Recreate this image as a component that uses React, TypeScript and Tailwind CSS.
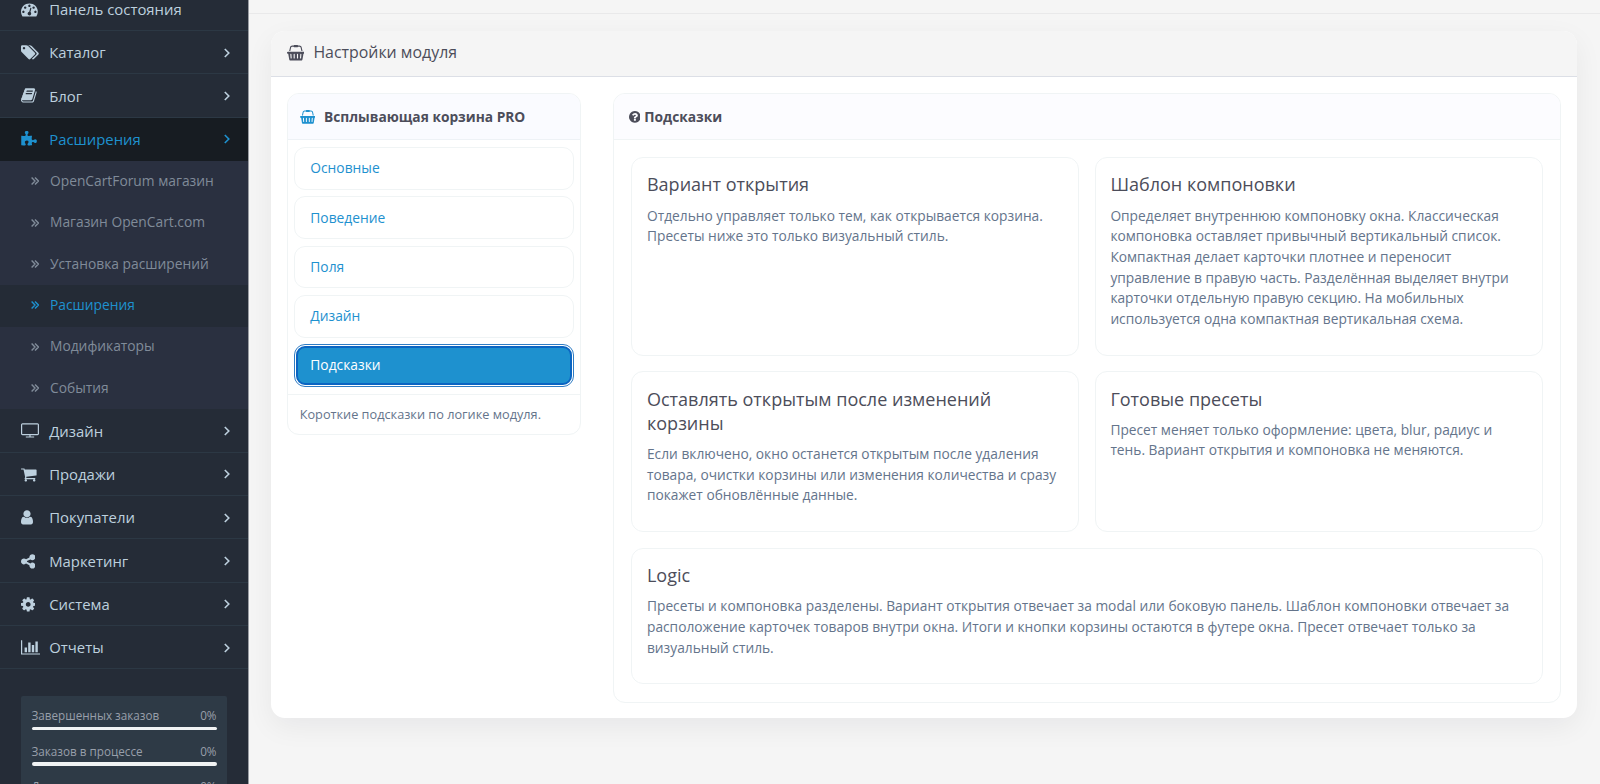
import { useState } from "react";
import clsx from "clsx";

interface IconProps {
  name: keyof typeof ICONS;
  className?: string;
}

const ICONS = {
  dashboard: {
    box: "0 0 1792 1792",
    d: "M384 1152q0-53-37.5-90.5t-90.5-37.5-90.5 37.5-37.5 90.5 37.5 90.5 90.5 37.5 90.5-37.5 37.5-90.5zm192-448q0-53-37.5-90.5t-90.5-37.5-90.5 37.5-37.5 90.5 37.5 90.5 90.5 37.5 90.5-37.5 37.5-90.5zm428 481l101-382q6-26-7.5-48.5t-38.5-29.5-48 6.5-30 39.5l-101 382q-60 5-107 43.5t-63 98.5q-20 77 20 146t117 89 146-20 89-117q16-60-6-117t-72-91zm660-33q0-53-37.5-90.5t-90.5-37.5-90.5 37.5-37.5 90.5 37.5 90.5 90.5 37.5 90.5-37.5 37.5-90.5zm-640-640q0-53-37.5-90.5t-90.5-37.5-90.5 37.5-37.5 90.5 37.5 90.5 90.5 37.5 90.5-37.5 37.5-90.5zm448 192q0-53-37.5-90.5t-90.5-37.5-90.5 37.5-37.5 90.5 37.5 90.5 90.5 37.5 90.5-37.5 37.5-90.5zm320 448q0 261-141 483-19 29-54 29h-1402q-35 0-54-29-141-221-141-483 0-182 71-348t191-286 286-191 348-71 348 71 286 191 191 286 71 348z",
  },
  tags: {
    box: "0 0 1920 1792",
    d: "M448 448q0-53-37.5-90.5t-90.5-37.5-90.5 37.5-37.5 90.5 37.5 90.5 90.5 37.5 90.5-37.5 37.5-90.5zm1067 576q0 53-37 90l-491 492q-39 37-91 37-53 0-90-37l-715-716q-38-37-64.5-101t-26.5-117v-416q0-52 38-90t90-38h416q53 0 117 26.5t102 64.5l715 714q37 39 37 91zm384 0q0 53-37 90l-491 492q-39 37-91 37-36 0-59-14t-53-45l470-470q37-37 37-90 0-52-37-91l-715-714q-38-38-102-64.5t-117-26.5h224q53 0 117 26.5t102 64.5l715 714q37 39 37 91z",
  },
  book: {
    box: "64 0 1792 1792",
    d: "M1703 478q40 57 18 129l-275 906q-19 64-76.5 107.5t-122.5 43.5h-923q-77 0-148.5-53.5t-99.5-131.5q-24-67-2-127 0-4 3-27t4-37q1-8-3-21.5t-3-19.5q2-11 8-21t16.5-23.5 16.5-23.5q23-38 45-91.5t30-91.5q3-10 .5-30t-.5-28q3-11 17-28t17-23q21-36 42-92t25-90q1-9-2.5-32t.5-28q4-13 22-30.5t22-22.5q19-26 42.5-84.5t27.5-96.5q1-8-3-25.5t-2-26.5q2-8 9-18t18-23 17-21q8-12 16.5-30.5t15-35 16-36 19.5-32 26.5-23.5 36-11.5 47.5 5.5l-1 3q38-9 51-9h761q74 0 114 56t18 130l-274 906q-36 119-71.5 153.5t-128.5 34.5h-869q-27 0-38 15-11 16-1 43 24 70 144 70h923q29 0 56-15.5t35-41.5l300-987q7-22 5-57 38 15 59 43zm-1064 2q-4 13 2 22.5t20 9.5h608q13 0 25.5-9.5t16.5-22.5l21-64q4-13-2-22.5t-20-9.5h-608q-13 0-25.5 9.5t-16.5 22.5zm-83 256q-4 13 2 22.5t20 9.5h608q13 0 25.5-9.5t16.5-22.5l21-64q4-13-2-22.5t-20-9.5h-608q-13 0-25.5 9.5t-16.5 22.5z",
  },
  puzzle: {
    box: "64 0 1792 1792",
    d: "M1755 1083q0 81-44.5 135t-123.5 54q-41 0-77.5-17.5t-59-38-56.5-38-71-17.5q-110 0-110 124 0 39 16 115t15 115v5q-22 0-33 1-34 3-97.5 11.5t-115.5 13.5-98 5q-61 0-103-26.5t-42-83.5q0-37 17.5-71t38-56.5 38-59 17.5-77.5q0-79-54-123.5t-135-44.5q-84 0-143 45.5t-59 127.5q0 43 15 83t33.5 64.5 33.5 53 15 50.5q0 45-46 89-37 35-117 35-95 0-245-24-9-2-27.5-4t-27.5-4l-13-2q-1 0-3-1-2 0-2-1v-1024q2 1 17.5 3.5t34 5 21.5 3.5q150 24 245 24 80 0 117-35 46-44 46-89 0-22-15-50.5t-33.5-53-33.5-64.5-15-83q0-82 59-127.5t144-45.5q80 0 134 44.5t54 123.5q0 41-17.5 77.5t-38 59-38 56.5-17.5 71q0 57 42 83.5t103 26.5q64 0 180-15t163-17v2q-1 2-3.5 17.5t-5 34-3.5 21.5q-24 150-24 245 0 80 35 117 44 46 89 46 22 0 50.5-15t53-33.5 64.5-33.5 83-15q82 0 127.5 59t45.5 143z",
  },
  television: {
    box: "0 0 1920 1792",
    d: "M1792 1248v-960q0-13-9.5-22.5t-22.5-9.5h-1600q-13 0-22.5 9.5t-9.5 22.5v960q0 13 9.5 22.5t22.5 9.5h1600q13 0 22.5-9.5t9.5-22.5zm128-960v960q0 66-47 113t-113 47h-736v128h352q14 0 23 9t9 23v64q0 14-9 23t-23 9h-832q-14 0-23-9t-9-23v-64q0-14 9-23t23-9h352v-128h-736q-66 0-113-47t-47-113v-960q0-66 47-113t113-47h1600q66 0 113 47t47 113z",
  },
  cart: {
    box: "64 0 1792 1792",
    d: "M704 1536q0 52-38 90t-90 38-90-38-38-90 38-90 90-38 90 38 38 90zm896 0q0 52-38 90t-90 38-90-38-38-90 38-90 90-38 90 38 38 90zm128-1088v512q0 24-16.5 42.5t-40.5 21.5l-1044 122q13 60 13 70 0 16-24 64h920q26 0 45 19t19 45-19 45-45 19h-1024q-26 0-45-19t-19-45q0-11 8-31.5t16-36 21.5-40 15.5-29.5l-177-823h-204q-26 0-45-19t-19-45 19-45 45-19h256q16 0 28.5 6.5t19.5 15.5 13 24.5 8 26 5.5 29.5 4.5 26h1201q26 0 45 19t19 45z",
  },
  user: {
    box: "256 0 1280 1792",
    d: "M1536 1399q0 109-62.5 187t-150.5 78h-854q-88 0-150.5-78t-62.5-187q0-85 8.5-160.5t31.5-152 58.5-131 94-89 134.5-34.5q131 128 313 128t313-128q76 0 134.5 34.5t94 89 58.5 131 31.5 152 8.5 160.5zm-256-887q0 159-112.5 271.5t-271.5 112.5-271.5-112.5-112.5-271.5 112.5-271.5 271.5-112.5 271.5 112.5 112.5 271.5z",
  },
  share: {
    box: "128 0 1536 1792",
    d: "M1344 1024q133 0 226.5 93.5t93.5 226.5-93.5 226.5-226.5 93.5-226.5-93.5-93.5-226.5q0-12 2-34l-360-180q-92 86-218 86-133 0-226.5-93.5t-93.5-226.5 93.5-226.5 226.5-93.5q126 0 218 86l360-180q-2-22-2-34 0-133 93.5-226.5t226.5-93.5 226.5 93.5 93.5 226.5-93.5 226.5-226.5 93.5q-126 0-218-86l-360 180q2 22 2 34t-2 34l360 180q92-86 218-86z",
  },
  cog: {
    box: "128 0 1536 1792",
    d: "M1152 896q0-106-75-181t-181-75-181 75-75 181 75 181 181 75 181-75 75-181zm512-109v222q0 12-8 23t-20 13l-185 28q-19 54-39 91 35 50 107 138 10 12 10 25t-9 23q-27 37-99 108t-94 71q-12 0-26-9l-138-108q-44 23-91 38-16 136-29 186-7 28-36 28h-222q-14 0-24.5-8.5t-11.5-21.5l-28-184q-49-16-90-37l-141 107q-10 9-25 9-14 0-25-11-126-114-165-168-7-10-7-23 0-12 8-23 15-21 51-66.5t54-70.5q-27-50-41-99l-183-27q-13-2-21-12.5t-8-23.5v-222q0-12 8-23t19-13l186-28q14-46 39-92-40-57-107-138-10-12-10-24 0-10 9-23 26-36 98.5-107.5t94.5-71.5q13 0 26 10l138 107q44-23 91-38 16-136 29-186 7-28 36-28h222q14 0 24.5 8.5t11.5 21.5l28 184q49 16 90 37l142-107q9-9 24-9 13 0 25 10 129 119 165 170 7 8 7 22 0 12-8 23-15 21-51 66.5t-54 70.5q26 50 41 98l183 28q13 2 21 12.5t8 23.5z",
  },
  chart: {
    box: "0 0 2048 1792",
    d: "M640 896v512h-256v-512h256zm384-512v1024h-256v-1024h256zm1024 1152v128h-2048v-1536h128v1408h1920zm-640-896v768h-256v-768h256zm384-384v1152h-256v-1152h256z",
  },
  question: {
    box: "128 0 1536 1792",
    d: "M1024 1376v-192q0-14-9-23t-23-9h-192q-14 0-23 9t-9 23v192q0 14 9 23t23 9h192q14 0 23-9t9-23zm256-672q0-88-55.5-163t-138.5-116-170-41q-243 0-371 213-15 24 8 42l132 100q7 6 19 6 16 0 25-12 53-68 86-92 34-24 86-24 48 0 85.5 26t37.5 59q0 38-20 61t-68 45q-63 28-115.5 86.5t-52.5 125.5v36q0 14 9 23t23 9h192q14 0 23-9t9-23q0-19 21.5-49.5t54.5-49.5q32-18 49-28.5t46-35 44.5-48 28-60.5 12.5-81zm384 192q0 209-103 385.5t-279.5 279.5-385.5 103-385.5-103-279.5-279.5-103-385.5 103-385.5 279.5-279.5 385.5-103 385.5 103 279.5 279.5 103 385.5z",
  },
  basket: {
    box: "0 0 2048 1792",
    d: "M1920 768q53 0 90.5 37.5t37.5 90.5-37.5 90.5-90.5 37.5h-15l-115 662q-8 46-44 76t-82 30h-1280q-46 0-82-30t-44-76l-115-662h-15q-53 0-90.5-37.5t-37.5-90.5 37.5-90.5 90.5-37.5h1792zm-1435 800q26-2 43.5-22.5t15.5-46.5l-32-416q-2-26-22.5-43.5t-46.5-15.5-43.5 22.5-15.5 46.5l32 416q2 25 20.5 42t43.5 17h5zm411-64v-416q0-26-19-45t-45-19-45 19-19 45v416q0 26 19 45t45 19 45-19 19-45zm384 0v-416q0-26-19-45t-45-19-45 19-19 45v416q0 26 19 45t45 19 45-19 19-45zm352 5l32-416q2-26-15.5-46.5t-43.5-22.5-46.5 15.5-22.5 43.5l-32 416q-2 26 15.5 46.5t43.5 22.5h5q25 0 43.5-17t20.5-42zm-1156-1217l-93 412h-132l101-441q19-88 89-143.5t160-55.5h167q0-26 19-45t45-19h384q26 0 45 19t19 45h167q90 0 160 55.5t89 143.5l101 441h-132l-93-412q-11-44-45.5-72t-79.5-28h-167q0 26-19 45t-45 19h-384q-26 0-45-19t-19-45h-167q-45 0-79.5 28t-45.5 72z",
  },
};

function Icon({ name, className }: IconProps) {
  return (
    <svg viewBox={ICONS[name].box} fill="currentColor" className={clsx("block shrink-0", className)}>
      <path d={ICONS[name].d} />
    </svg>
  );
}

interface MenuEntry {
  icon: keyof typeof ICONS;
  label: string;
  leaf?: boolean;
  children?: string[];
}

const MENU: MenuEntry[] = [
  { icon: "dashboard", label: "Панель состояния", leaf: true },
  { icon: "tags", label: "Каталог" },
  { icon: "book", label: "Блог" },
  {
    icon: "puzzle",
    label: "Расширения",
    children: [
      "OpenCartForum магазин",
      "Магазин OpenCart.com",
      "Установка расширений",
      "Расширения",
      "Модификаторы",
      "События",
    ],
  },
  { icon: "television", label: "Дизайн" },
  { icon: "cart", label: "Продажи" },
  { icon: "user", label: "Покупатели" },
  { icon: "share", label: "Маркетинг" },
  { icon: "cog", label: "Система" },
  { icon: "chart", label: "Отчеты" },
];

const STATS = ["Завершенных заказов", "Заказов в процессе", "Другие статусы"];

const TABS = ["Основные", "Поведение", "Поля", "Дизайн", "Подсказки"];

const HINTS = [
  {
    title: "Вариант открытия",
    text: "Отдельно управляет только тем, как открывается корзина. Пресеты ниже это только визуальный стиль.",
  },
  {
    title: "Шаблон компоновки",
    text: "Определяет внутреннюю компоновку окна. Классическая компоновка оставляет привычный вертикальный список. Компактная делает карточки плотнее и переносит управление в правую часть. Разделённая выделяет внутри карточки отдельную правую секцию. На мобильных используется одна компактная вертикальная схема.",
  },
  {
    title: "Оставлять открытым после изменений корзины",
    text: "Если включено, окно останется открытым после удаления товара, очистки корзины или изменения количества и сразу покажет обновлённые данные.",
  },
  {
    title: "Готовые пресеты",
    text: "Пресет меняет только оформление: цвета, blur, радиус и тень. Вариант открытия и компоновка не меняются.",
  },
  {
    title: "Logic",
    wide: true,
    text: "Пресеты и компоновка разделены. Вариант открытия отвечает за modal или боковую панель. Шаблон компоновки отвечает за расположение карточек товаров внутри окна. Итоги и кнопки корзины остаются в футере окна. Пресет отвечает только за визуальный стиль.",
  },
];

function SubMenu({ items }: { items: string[] }) {
  return (
    <ul className="bg-[#2a3040]">
      {items.map((item) => (
        <li
          key={item}
          className={clsx(
            "flex h-[41.4px] items-center pb-[1.2px] pl-[31.2px] text-[13.8px]",
            item === "Расширения" ? "bg-[#242b36] text-[#1e91cf]" : "text-[#808b99]",
          )}
        >
          <svg
            viewBox="0 0 8 8"
            className="mr-[10.8px] h-2 w-2 shrink-0"
            fill="none"
            stroke="currentColor"
            strokeWidth="1.4"
          >
            <path d="M0.6 0.5 L4 4 L0.6 7.5 M4 0.5 L7.4 4 L4 7.5" />
          </svg>
          {item}
        </li>
      ))}
    </ul>
  );
}

function Sidebar() {
  return (
    <nav className="h-full w-[249px] shrink-0 overflow-hidden border-r border-[#9a9da3] bg-[#252c37]">
      <ul className="-mt-[12.3px]">
        {MENU.map((item) => (
          <li key={item.label}>
            <div
              className={clsx(
                "flex h-[43.35px] items-center border-b pt-[0.6px] pr-[18.5px] pl-[21px] text-[14.88px]",
                item.children
                  ? "border-[#171c22] bg-[#171c22] text-[#1e91cf]"
                  : "border-[#2c3844] text-[#bdd0de]",
              )}
            >
              <span className="w-[28.2px] shrink-0">
                <Icon name={item.icon} className="h-[16.8px]" />
              </span>
              <span className="grow">{item.label}</span>
              {!item.leaf && (
                <svg
                  viewBox="0 0 6 10"
                  className="h-[10px] w-[6px]"
                  fill="none"
                  stroke="currentColor"
                  strokeWidth="1.6"
                >
                  <path d="M0.8 1 L4.8 5 L0.8 9" />
                </svg>
              )}
            </div>
            {item.children && <SubMenu items={item.children} />}
          </li>
        ))}
      </ul>

      <div className="mt-[26.5px] mr-[21px] ml-[21px] rounded-[2px] bg-[#2e3a46] px-[10.5px] pt-[10px]">
        {STATS.map((label) => (
          <div key={label} className="h-[35.6px]">
            <div className="flex justify-between text-[11.7px] leading-[18px] text-[#989faa]">
              <span>{label}</span>
              <span>0%</span>
            </div>
            <div className="mt-[2.8px] h-[3.7px] rounded-[2px] bg-[#f1f3f4]" />
          </div>
        ))}
      </div>
    </nav>
  );
}

function TabsCard() {
  const [active, setActive] = useState("Подсказки");

  return (
    <section className="w-[294.5px] shrink-0 self-start overflow-hidden rounded-[12px] border border-[#f0f4f5]">
      <header className="flex h-[46px] items-center border-b border-[#eef2f6] bg-[#fafbff] pt-px pl-[12px] text-[13.76px] font-bold text-[#4c4d5a]">
        <Icon name="basket" className="mr-[8.6px] h-[13.75px] text-[#1e91cf]" />
        Всплывающая корзина PRO
      </header>
      <div className="flex flex-col gap-[6.6px] px-[6px] pt-[7px] pb-[6.8px]">
        {TABS.map((tab) => (
          <button
            key={tab}
            onClick={() => setActive(tab)}
            className={clsx(
              "h-[42.7px] rounded-[11px] border text-left text-[13.8px]",
              tab === active
                ? "border-[#2f7cc4] p-px text-white"
                : "border-[#f0f4f5] px-[15.6px] pt-[0.6px] text-[#1e91cf]",
            )}
          >
            {tab === active ? (
              <span className="flex h-full items-center rounded-[9px] border-2 border-[#0b65c2] bg-[#1e91cf] px-[12.6px]">
                {tab}
              </span>
            ) : (
              tab
            )}
          </button>
        ))}
      </div>
      <footer className="flex h-[40px] items-center border-t border-[#f0f4f5] px-[12px] text-[12.72px] text-[#64748b]">
        Короткие подсказки по логике модуля.
      </footer>
    </section>
  );
}

function HintsCard() {
  return (
    <section className="grow overflow-hidden rounded-[12px] border border-[#f0f4f5]">
      <header className="flex h-[46px] items-center border-b border-[#f0f4f5] bg-[#fcfcff] pt-px pl-[14.5px] text-[13.8px] font-bold text-[#4c4d5a]">
        <Icon name="question" className="mr-[3.7px] h-[13.75px]" />
        Подсказки
      </header>
      <div className="grid grid-cols-2 gap-[15.4px] px-[17.2px] pt-[17px] pb-[17.6px]">
        {HINTS.map((hint) => (
          <article
            key={hint.title}
            className={clsx(
              "rounded-[12px] border border-[#f0f4f5] px-[14.6px] pt-[14.4px] pb-[25.2px]",
              hint.wide && "col-span-2",
            )}
          >
            <h4 className="mb-[8.8px] text-[18.02px] leading-[24.4px] text-[#4c4d5a]">{hint.title}</h4>
            <p className="text-[13.76px] leading-[20.66px] text-[#64748b]">{hint.text}</p>
          </article>
        ))}
      </div>
    </section>
  );
}

export default function App() {
  return (
    <div className="flex h-[784px] w-[1600px] overflow-hidden bg-[#f5f5f5] font-['Open_Sans',sans-serif]">
      <Sidebar />
      <main className="grow">
        <div className="h-[14px] border-b border-[#e9e9ea]" />
        <div className="mt-[17px] mr-[23px] ml-[21.7px] h-[687.3px] rounded-[14px] bg-white shadow-[0_9px_28px_rgba(15,23,42,0.06)]">
          <header className="flex h-[46px] items-center rounded-t-[14px] border-b border-[#dcdfe6] bg-[#f5f5f5] pb-px pl-[16px] text-[15.9px] text-[#4c4d5a]">
            <Icon name="basket" className="mr-[9px] h-[15.5px]" />
            Настройки модуля
          </header>
          <div className="flex gap-[32px] px-4 py-4">
            <TabsCard />
            <HintsCard />
          </div>
        </div>
      </main>
    </div>
  );
}
